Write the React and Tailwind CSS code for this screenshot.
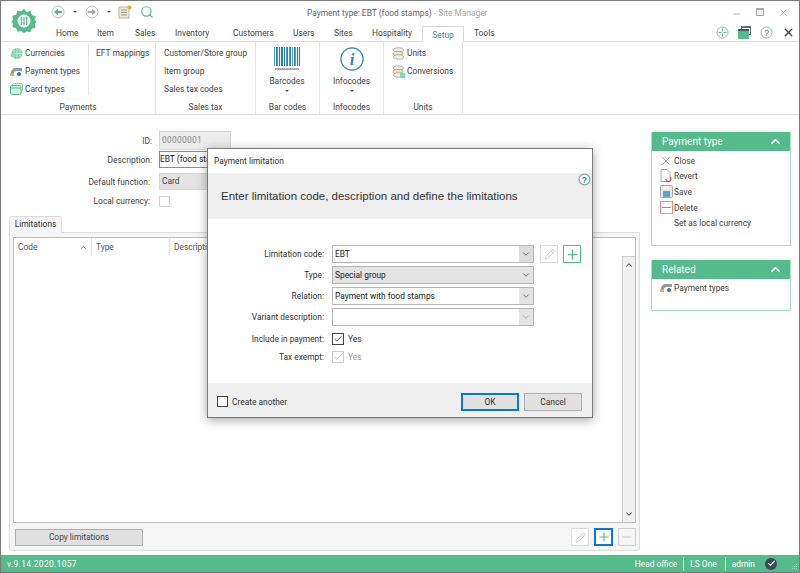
import React from "react";
import { Check, ChevronDown, ChevronUp, Plus, Minus, X, Pencil, Search } from "lucide-react";

const Caret = () => <span className="inline-block w-0 h-0 border-l-[2px] border-r-[2px] border-t-[2px] border-l-transparent border-r-transparent border-t-[#555]" />;

const CircleArrow = ({ color, dir = "left" }) => (
  <svg width="14" height="14" viewBox="0 0 14 14">
    <circle cx="7" cy="7" r="6" fill="#fff" stroke="#bbb" strokeWidth="1" />
    <path d={dir === "left" ? "M3 7l4-3.500V6h4v2H7v2.500z" : "M11 7L7 3.500V6H3v2h4v2.500z"} fill={color} />
  </svg>
);

const Logo = () => (
  <svg width="26" height="26" viewBox="0 0 30 30">
    <path d="M15 1l3 3.500 4.500-1 1.500 4.500 4.500 1.500-1 4.500 2 2-2 2.500 1 4-4.500 1.500-1.500 4-4.500-1L15 29l-3-2.500-4.500 1L6 23.500l-4.500-1.500 1-4L.5 15.500l2-2-1-4.500L6 7.500l1.500-4.500 4.500 1z" fill="#55bb8b" />
    <circle cx="15" cy="15" r="7.500" fill="#fff" />
    <path d="M12 10v10M15 10v10M18 10v10" stroke="#55bb8b" strokeWidth="1.400" />
    <path d="M11 13h2M14 17h2M17 12h2" stroke="#55bb8b" strokeWidth="1.400" />
  </svg>
);

const CurrencyIcon = () => (
  <svg width="13" height="13" viewBox="0 0 13 13"><circle cx="7" cy="6.500" r="5.500" fill="#7fcfa8" /><path d="M2 6.500h10M7 1v11M4 2.500v8M10 2.500v8" stroke="#c6ecd9" strokeWidth="1" /><circle cx="3" cy="8" r="2.500" fill="#9ad9bb" /></svg>
);
const PayIcon = () => (
  <svg width="13" height="11" viewBox="0 0 13 11"><path d="M1 7c0-3 2-5 5-5h6v3H7C5 5 4 6 4 7z" fill="#9a9a9a" /><rect x="0" y="7" width="4" height="3" fill="#e8b04a" /><rect x="7" y="6" width="4" height="4" rx="2" fill="#2878a8" /></svg>
);
const CardIcon = () => (
  <svg width="13" height="12" viewBox="0 0 13 12"><rect x="2.500" y=".5" width="10" height="8" rx="1.500" fill="#fff" stroke="#7fcfa8" /><rect x=".5" y="2.500" width="10.500" height="9" rx="1.500" fill="#d6f2e4" stroke="#55bb8b" /><path d="M1 5h10" stroke="#55bb8b" /></svg>
);
const UnitIcon = ({ green }) => (
  <svg width="13" height="13" viewBox="0 0 13 13"><ellipse cx="6.500" cy="3" rx="5" ry="2.200" fill="#eee" stroke="#999" strokeWidth=".7" /><ellipse cx="6" cy="6.500" rx="5" ry="2.200" fill="#f3e2b0" stroke="#999" strokeWidth=".7" /><ellipse cx="6.500" cy="10" rx="5" ry="2.200" fill="#eee" stroke="#999" strokeWidth=".7" />{green && <rect x="8" y="8" width="5" height="5" fill="#7fdcae" />}</svg>
);

const Barcode = () => (
  <svg width="26" height="24" viewBox="0 0 26 24">
    {[0,2,3,5,7,8,10,12,13,15,16,18,20,21,23,25].map((x) => <rect key={x} x={x} y="0" width="1.100" height="19" fill={x % 3 === 0 ? "#5b9fc4" : "#2f7ea8"} />)}
    <rect x="1" y="21" width="24" height="2" fill="#aaa" />
  </svg>
);

const RibbonItem = ({ icon, children }) => (
  <div className="flex items-center h-[18px] whitespace-nowrap">
    {icon && <span className="w-[16px] mr-[1px] flex justify-center">{icon}</span>}
    <span>{children}</span>
  </div>
);

const Group = ({ label, w, children, center }) => (
  <div className={`${w} h-full flex flex-col border-r border-[#e3e3e3] pt-[2px]`}>
    <div className={`flex-1 flex ${center ? "justify-center" : ""}`}>{children}</div>
    <div className="h-[14px] text-center leading-[14px]">{label}</div>
  </div>
);

const SquareBtn = ({ children, className }) => (
  <div className={`w-[18px] h-[18px] flex items-center justify-center bg-white ${className}`}>{children}</div>
);

const SideItem = ({ icon, children }) => (
  <div className="flex items-center h-[15.600px] whitespace-nowrap">
    <span className="w-[14px] mr-[1px] flex justify-center items-center">{icon}</span>
    <span>{children}</span>
  </div>
);

const SideHeader = ({ children }) => (
  <div className="h-[19px] bg-[#55bb8b] text-white flex items-center justify-between pl-[10px] pr-[7px] text-[10px]">
    <span>{children}</span>
    <ChevronUp size={15} strokeWidth={2.500} />
  </div>
);

const FormRow = ({ label, children, className = "", pr = "pr-[7px]", w = "w-[116px]" }) => (
  <div className={`flex items-center ${className}`}>
    <div className={`${w} text-right ${pr} text-[#444] whitespace-nowrap`}>{label}</div>
    {children}
  </div>
);

const DialogSelect = ({ bg = "bg-white", children, arrowBg = "", disabled }) => (
  <div className={`w-[202px] h-[18px] flex items-center border border-[#b5b5b5] ${bg}`}>
    <span className="flex-1 pl-[2px] text-[#222] whitespace-nowrap">{children}</span>
    <span className={`w-[14px] h-full flex items-center justify-center ${arrowBg}`}>
      <ChevronDown size={10} className={disabled ? "text-[#aaa]" : "text-[#666]"} />
    </span>
  </div>
);

function DRow({ label, children, mt, className = "" }) {
  return (
    <div className={`flex items-center h-[18px] ${mt ? "mt-[3px]" : ""} ${className}`}>
      <div className="w-[124px] text-right pr-[8px] whitespace-nowrap">{label}</div>
      {children}
    </div>
  );
}

const tabs = [
  ["Home", "w-[41px]"],
  ["Item", "w-[38px]"],
  ["Sales", "w-[40px]"],
  ["Inventory", "w-[58px]"],
  ["Customers", "w-[60px]"],
  ["Users", "w-[41px]"],
  ["Sites", "w-[38px]"],
  ["Hospitality", "w-[60px]"],
];

export default function App() {
  return (
    <div className="relative w-[800px] h-[573px] overflow-hidden bg-white border border-[#7a7a7a] flex flex-col text-[8.400px] leading-[12px] text-[#444]" style={{ fontFamily: '"Roboto","Liberation Sans",sans-serif' }}>
      {/* Title and tab strip */}
      <div className="h-[40px] flex shrink-0">
        <div className="w-[45px] flex items-center justify-center pb-[1px] pl-[1px]"><Logo /></div>
        <div className="flex-1 flex flex-col">
          <div className="h-[22px] flex items-center relative">
            <div className="ml-[5px] flex items-center">
              <CircleArrow color="#55bb8b" />
              <span className="ml-[8px] mr-[8px] flex"><Caret /></span>
              <CircleArrow color="#aaa" dir="right" />
              <span className="ml-[8px] mr-[7px] flex"><Caret /></span>
              <svg width="14" height="14" viewBox="0 0 14 14"><rect x="1" y="2" width="10" height="11" fill="#f6e8c4" stroke="#b8b8b8" /><path d="M3 5h6M3 7.500h6M3 10h6" stroke="#999" /><circle cx="11.500" cy="2.500" r="2" fill="#e8a92c" /></svg>
              <Search size={14} className="ml-[8px] text-[#55bb8b]" />
            </div>
            <div className="absolute left-[261px] top-[6px] whitespace-nowrap text-[#666]">Payment type: EBT (food stamps) <span className="text-[#aaa]">- Site Manager</span></div>
            <div className="ml-auto flex items-center text-[#aaa] pr-[10px] gap-[14px]">
              <Minus size={10} className="mt-[3px]" />
              <span className="w-[8px] h-[8px] border border-[#aaa] border-t-2" />
              <X size={11} />
            </div>
          </div>
          <div className="h-[18px] flex items-start">
            <div className="flex text-[#444] items-end h-[18px]">
              {tabs.map(([t, w]) => (
                <div key={t} className={`pl-[10px] h-[16px] leading-[17px] whitespace-nowrap ${w}`}>{t}</div>
              ))}
              <div className="w-[42px] text-center h-[16px] leading-[14px] pt-[1px] border border-b-0 border-[#d8d8d8] bg-white text-[#3f8fc4] relative z-10 -mb-[1px]">Setup</div>
              <div className="px-[10px] h-[16px] leading-[17px]">Tools</div>
            </div>
            <div className="ml-auto flex items-center gap-[9px] pr-[4px] pt-[3px]">
              <svg width="13" height="13" viewBox="0 0 13 13"><circle cx="6.500" cy="6.500" r="5.500" fill="#fff" stroke="#aaa" /><path d="M6.500 2.500v3M6.500 7.500v3M2.500 6.500h3M7.500 6.500h3" stroke="#55bb8b" strokeWidth="1.200" /></svg>
              <svg width="13" height="13" viewBox="0 0 13 13"><rect x="3" y="0" width="10" height="9" fill="#5a6e80" /><rect x="4" y="2" width="8" height="6" fill="#fff" /><rect x="0" y="3" width="11" height="10" fill="#55bb8b" /><rect x="0" y="3" width="11" height="2" fill="#3c5566" /></svg>
              <svg width="13" height="13" viewBox="0 0 13 13"><circle cx="6.500" cy="6.500" r="5.500" fill="#fff" stroke="#aaa" /><text x="6.500" y="9.800" textAnchor="middle" fontSize="9" fill="#2878a8" fontFamily="Liberation Sans">?</text></svg>
              <X size={13} strokeWidth={2.600} className="text-[#3a4a58]" />
            </div>
          </div>
        </div>
      </div>

      {/* Ribbon */}
      <div className="h-[74px] shrink-0 border-y border-[#dcdcdc] flex">
        <Group label="Payments" w="w-[155px]">
          <div className="w-[88px] pl-[7px] h-[51px] border-r border-[#e3e3e3]">
            <RibbonItem icon={<CurrencyIcon />}>Currencies</RibbonItem>
            <RibbonItem icon={<PayIcon />}>Payment types</RibbonItem>
            <RibbonItem icon={<CardIcon />}>Card types</RibbonItem>
          </div>
          <div className="pl-[7px]"><RibbonItem>EFT mappings</RibbonItem></div>
        </Group>
        <Group label="Sales tax" w="w-[100px]">
          <div className="pl-[8px]">
            <RibbonItem>Customer/Store group</RibbonItem>
            <RibbonItem>Item group</RibbonItem>
            <RibbonItem>Sales tax codes</RibbonItem>
          </div>
        </Group>
        <Group label="Bar codes" w="w-[64px]" center>
          <div className="flex flex-col items-center pt-[3px] pr-[1px]">
            <Barcode />
            <div className="mt-[4px]">Barcodes</div>
            <div className="mt-[3px] flex"><Caret /></div>
          </div>
        </Group>
        <Group label="Infocodes" w="w-[64px]" center>
          <div className="flex flex-col items-center pt-[3px]">
            <svg width="24" height="24" viewBox="0 0 26 26"><circle cx="13" cy="13" r="12" fill="#fff" stroke="#2f86b0" strokeWidth="1.300" /><text x="13" y="20" textAnchor="middle" fontSize="18" fontWeight="700" fontStyle="italic" fill="#2f86b0" fontFamily="Liberation Serif">i</text></svg>
            <div className="mt-[4px]">Infocodes</div>
            <div className="mt-[3px] flex"><Caret /></div>
          </div>
        </Group>
        <Group label="Units" w="w-[79px]">
          <div className="pl-[6px]">
            <RibbonItem icon={<UnitIcon />}>Units</RibbonItem>
            <RibbonItem icon={<UnitIcon green />}>Conversions</RibbonItem>
          </div>
        </Group>
      </div>

      {/* Main */}
      <div className="flex-1 flex min-h-0">
        <div className="w-[639px] flex flex-col pl-[8px]">
          <div className="pl-[34px] pt-[16px] h-[101px] shrink-0">
            <FormRow label="ID:"><div className="w-[72px] h-[19px] bg-[#ececec] border border-[#d5d5d5] text-[#888] pl-[2px] leading-[17px] tracking-[0.300px]">00000001</div></FormRow>
            <FormRow label="Description:" className="mt-[1px]"><div className="w-[300px] h-[17px] bg-white border border-[#8a8a8a] leading-[15px] text-[#222]">EBT (food stamps)</div></FormRow>
            <FormRow label="Default function:" pr="pr-[9px]" className="mt-[5px]"><div className="w-[300px] h-[17px] bg-[#e3e3e3] border border-[#d5d5d5] pl-[2px] leading-[15px]">Card</div></FormRow>
            <FormRow label="Local currency:" pr="pr-[9px]" className="mt-[5px]"><div className="w-[11px] h-[11px] bg-white border border-[#cfcfcf]" /></FormRow>
          </div>
          <div className="flex relative z-10 -mb-[1px]">
            <div className="w-[53px] h-[17px] bg-[#f5f5f5] border border-b-0 border-[#dcdcdc] rounded-t-[3px] text-center leading-[15px] text-[#333]">Limitations</div>
          </div>
          <div className="h-[319px] bg-[#f6f6f6] border border-[#dcdcdc] rounded-b-[3px] px-[3px] pt-[4px] flex flex-col">
            <div className="h-[286px] bg-white border border-[#bdbdbd] flex flex-col">
              <div className="h-[18px] flex text-[#555] items-center shrink-0">
                <div className="w-[78px] pl-[4px] border-r border-[#e3e3e3] h-full flex items-center justify-between pr-[3px]"><span>Code</span><ChevronUp size={9} /></div>
                <div className="w-[78px] pl-[4px] border-r border-[#e3e3e3] h-full flex items-center">Type</div>
                <div className="pl-[4px]">Description</div>
              </div>
              <div className="flex-1 flex justify-end">
                <div className="w-[13px] bg-[#f0f0f0] border-l border-t border-[#cfcfcf] flex flex-col justify-between items-center py-[3px]">
                  <ChevronUp size={10} strokeWidth={2.500} className="text-[#555]" />
                  <ChevronDown size={10} strokeWidth={2.500} className="text-[#555]" />
                </div>
              </div>
            </div>
            <div className="flex items-center mt-[5px] pl-[2px]">
              <div className="w-[128px] h-[17px] bg-[#e1e1e1] border border-[#adadad] text-center leading-[15px] text-[#444]">Copy limitations</div>
              <div className="ml-auto flex gap-[5px]">
                <SquareBtn className="border border-[#dcdcdc]"><Pencil size={11} className="text-[#ccc]" /></SquareBtn>
                <SquareBtn className="border-2 border-[#0a78d7] w-[19px]"><Plus size={14} className="text-[#55bb8b]" /></SquareBtn>
                <SquareBtn className="border border-[#cfcfcf] !bg-[#f6f6f6]"><Minus size={14} className="text-[#c8c8c8]" /></SquareBtn>
              </div>
            </div>
          </div>
        </div>

        <div className="ml-[11px] w-[140px] pt-[17px]">
          <div className="border-b border-x border-[#a9dfc5]">
            <SideHeader>Payment type</SideHeader>
            <div className="h-[94px] pl-[7px] pt-[2px]">
              <SideItem icon={<X size={14} strokeWidth={1} className="text-[#666]" />}>Close</SideItem>
              <SideItem icon={<svg width="12" height="14" viewBox="0 0 12 14"><path d="M1 .5h6l3 3v9H1z" fill="#fff" stroke="#aaa" /><path d="M6 10a2.500 2.500 0 1 0 4-2" fill="none" stroke="#e04040" strokeWidth="1.200" /></svg>}>Revert</SideItem>
              <SideItem icon={<svg width="13" height="13" viewBox="0 0 13 13"><rect x=".5" y=".5" width="12" height="12" rx="1" fill="#e8e8e8" stroke="#aaa" /><rect x="3" y="6" width="7" height="6" fill="#5aa5cf" /><rect x="3" y="1" width="6" height="3" fill="#fff" /></svg>}>Save</SideItem>
              <SideItem icon={<span className="w-[13px] h-[13px] border border-[#f08a8a] flex items-center justify-center"><span className="w-[9px] h-[1px] bg-[#e86a6a]" /></span>}>Delete</SideItem>
              <SideItem>Set as local currency</SideItem>
            </div>
          </div>
          <div className="border-b border-x border-[#a9dfc5] mt-[14px]">
            <SideHeader>Related</SideHeader>
            <div className="h-[31px] pl-[7px] pt-[1px]">
              <SideItem icon={<PayIcon />}>Payment types</SideItem>
            </div>
          </div>
        </div>
      </div>

      {/* Status bar */}
      <div className="h-[17px] shrink-0 bg-[#55bb8b] text-white flex items-center pl-[6px] pr-[1px]">
        <span className="tracking-[0.350px]">v.9.14.2020.1057</span>
        <div className="ml-auto flex items-center">
          <span className="pr-[6px] border-r border-[#c8ecdb] h-[14px] leading-[14px]">Head office</span>
          <span className="pl-[6px] pr-[8px] border-r border-[#c8ecdb] h-[14px] leading-[14px]">LS One</span>
          <span className="pl-[6px]">admin</span>
          <span className="ml-[10px] w-[12px] h-[12px] rounded-full bg-[#3a4a58] flex items-center justify-center"><Check size={9} strokeWidth={3} className="text-white" /></span>
          <svg className="ml-[12px] mt-[6px]" width="9" height="8" viewBox="0 0 9 8"><path d="M7 1h1v1H7zM5 3h1v1H5zM7 3h1v1H7zM3 5h1v1H3zM5 5h1v1H5zM7 5h1v1H7z" fill="#9fdcc0" /></svg>
        </div>
      </div>

      {/* Dialog */}
      <div className="absolute left-[206px] top-[147px] w-[386px] h-[270px] bg-white border border-[#7a7a7a] shadow-[0_2px_10px_rgba(0,0,0,0.35)] flex flex-col">
        <div className="h-[24px] shrink-0 pl-[6px] flex items-center text-[#333]">Payment limitation</div>
        <div className="relative h-[46px] shrink-0 bg-[#efefef] flex items-center pl-[13px] text-[11.500px] text-[#333]" style={{ fontFamily: '"Liberation Sans",sans-serif' }}>
          Enter limitation code, description and define the limitations
          <svg className="absolute right-[1px] top-[0px]" width="13" height="13" viewBox="0 0 12 12"><circle cx="6" cy="6" r="5" fill="#fff" stroke="#8aa" strokeWidth="1.200" /><text x="6" y="9" textAnchor="middle" fontSize="8" fontWeight="700" fill="#2878a8" fontFamily="Liberation Sans">?</text></svg>
        </div>
        <div className="flex-1 pt-[26px] text-[#333]">
          <DRow label="Limitation code:">
            <DialogSelect arrowBg="bg-[#dcdcdc]">EBT</DialogSelect>
            <SquareBtn className="ml-[6px] border border-[#dcdcdc]"><Pencil size={11} className="text-[#ccc]" /></SquareBtn>
            <SquareBtn className="ml-[5px] border border-[#55bb8b]"><Plus size={15} className="text-[#55bb8b]" /></SquareBtn>
          </DRow>
          <DRow label="Type:" mt><DialogSelect bg="bg-[#e3e3e3]">Special group</DialogSelect></DRow>
          <DRow label="Relation:" mt><DialogSelect arrowBg="bg-[#e3e3e3]">Payment with food stamps</DialogSelect></DRow>
          <DRow label="Variant description:" mt><DialogSelect arrowBg="bg-[#e3e3e3]" disabled></DialogSelect></DRow>
          <DRow label="Include in payment:" className="mt-[4px]">
            <span className="w-[12px] h-[12px] border border-[#444] flex items-center justify-center"><Check size={10} className="text-[#444]" /></span>
            <span className="ml-[4px]">Yes</span>
          </DRow>
          <DRow label="Tax exempt:">
            <span className="w-[12px] h-[12px] border border-[#ccc] flex items-center justify-center"><Check size={10} className="text-[#bbb]" /></span>
            <span className="ml-[4px] text-[#999]">Yes</span>
          </DRow>
        </div>
        <div className="h-[34px] shrink-0 bg-[#f0f0f0] flex items-center pl-[9px] pr-[10px] pt-[3px] text-[#333]">
          <span className="w-[11px] h-[11px] bg-white border border-[#444]" />
          <span className="ml-[4px]">Create another</span>
          <div className="ml-auto w-[58px] h-[18px] bg-[#e1e1e1] border-2 border-[#0a78d7] text-center leading-[14px]">OK</div>
          <div className="ml-[5px] w-[58px] h-[18px] bg-[#e1e1e1] border border-[#adadad] text-center leading-[16px]">Cancel</div>
        </div>
      </div>
    </div>
  );
}
